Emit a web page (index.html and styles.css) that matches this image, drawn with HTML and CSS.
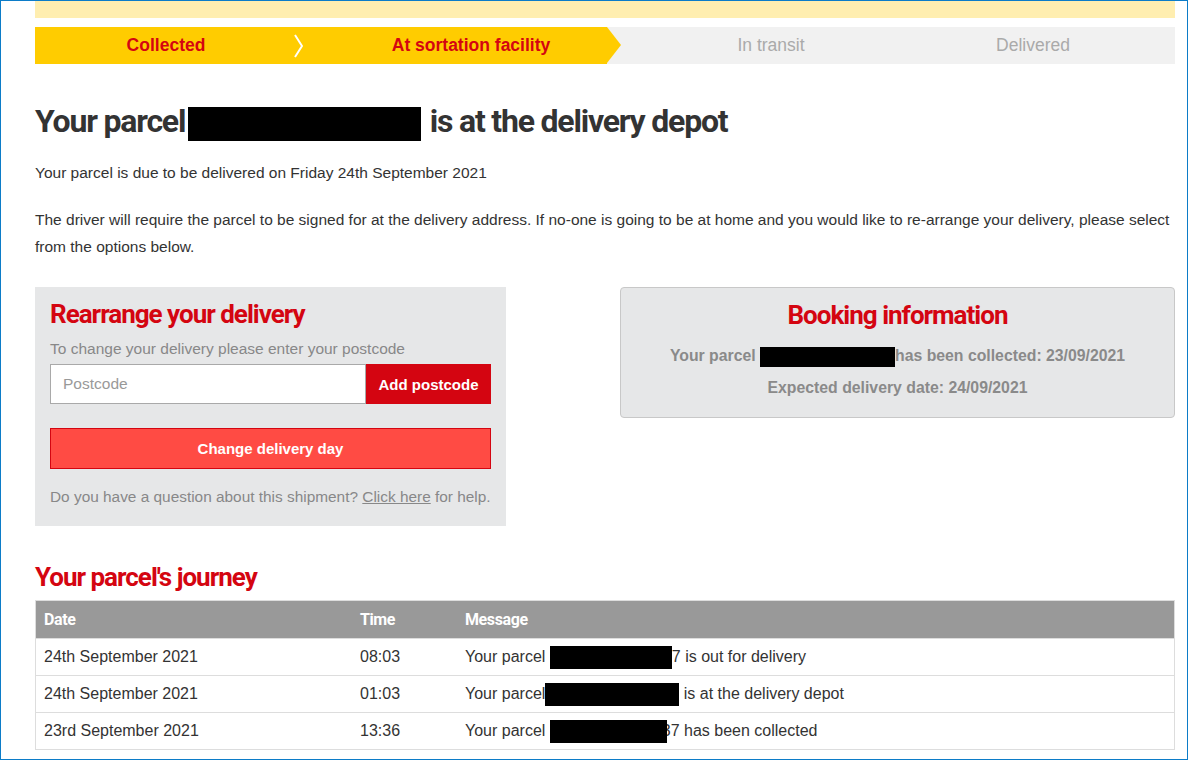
FILE: index.html
```html
<!DOCTYPE html>
<html lang="en">
  <head>
    <meta charset="UTF-8" />
    <meta name="viewport" content="width=device-width, initial-scale=1.0" />
    <title>Track your parcel</title>
    <link rel="stylesheet" href="styles.css">
  </head>
  <body>
    <div class="window">
      <div class="page">
        <div class="notice"></div>

        <div class="progress">
          <div class="step step-first done">Collected</div>
          <div class="chevron">
            <svg width="9" height="24" viewBox="0 0 9 24">
              <polyline points="1,1 8,12 1,23" fill="none" stroke="#fff" stroke-width="2" />
            </svg>
          </div>
          <div class="step step-current done">At sortation facility</div>
          <div class="step step-third">In transit</div>
          <div class="step step-last">Delivered</div>
        </div>

        <h1 class="title">
          Your parcel <span class="redact redact-title"></span> is at the delivery depot
        </h1>

        <p class="lead">Your parcel is due to be delivered on Friday 24th September 2021</p>
        <p class="lead">
          The driver will require the parcel to be signed for at the delivery address. If no-one is going to be at home and you would like to re-arrange your delivery, please select from the options below.
        </p>

        <div class="panels">
          <div class="rearrange">
            <h2 class="red-heading">Rearrange your delivery</h2>
            <p class="hint">To change your delivery please enter your postcode</p>
            <div class="postcode">
              <input type="text" class="postcode-input" placeholder="Postcode" />
              <button class="postcode-button">Add postcode</button>
            </div>
            <button class="change-day">Change delivery day</button>
            <p class="help">Do you have a question about this shipment? <a href="#">Click here</a> for help.</p>
          </div>

          <div class="booking">
            <h2 class="red-heading">Booking information</h2>
            <p class="booking-line">Your parcel <span class="redact redact-booking"></span>has been collected: 23/09/2021</p>
            <p class="booking-line">Expected delivery date: 24/09/2021</p>
          </div>
        </div>

        <h2 class="red-heading journey-title">Your parcel's journey</h2>

        <table class="journey">
          <thead>
            <tr>
              <th class="col-date">Date</th>
              <th class="col-time">Time</th>
              <th>Message</th>
            </tr>
          </thead>
          <tbody>
            <tr>
              <td>24th September 2021</td>
              <td>08:03</td>
              <td>Your parcel <span class="redact redact-row1"></span>7 is out for delivery</td>
            </tr>
            <tr>
              <td>24th September 2021</td>
              <td>01:03</td>
              <td>Your parcel<span class="redact redact-row2"></span> is at the delivery depot</td>
            </tr>
            <tr>
              <td>23rd September 2021</td>
              <td>13:36</td>
              <td>Your parcel <span class="redact redact-row3"></span>37 has been collected</td>
            </tr>
          </tbody>
        </table>
      </div>
    </div>
  </body>
</html>
```

FILE: styles.css
```css
body {
  margin: 0;
  font-family: "Liberation Sans", Arial, sans-serif;
  color: #333;
  background-color: #fff;
}
.window {
  width: 1186px;
  height: 758px;
  border: 1px solid #0c7cc8;
  overflow: hidden;
}
.page {
  width: 1140px;
  margin-left: 34px;
}
.notice {
  height: 17px;
  background-color: #ffeeb0;
}

/* progress bar */
.progress {
  display: flex;
  height: 37px;
  margin-top: 9px;
  background-color: #f1f1f1;
  font-size: 17.5px;
}
.step {
  display: flex;
  align-items: center;
  justify-content: center;
  color: #aaa;
}
.step.done {
  background-color: #fc0;
  color: #d40511;
  font-weight: bold;
}
.step-first {
  width: 259px;
  padding-left: 3px;
  box-sizing: border-box;
}
.chevron {
  display: flex;
  align-items: center;
  width: 9px;
  background-color: #fc0;
}
.step-current {
  position: relative;
  width: 304px;
  padding-left: 32px;
  box-sizing: border-box;
}
.step-current::after {
  content: "";
  position: absolute;
  top: 0;
  right: -14px;
  border-top: 18.5px solid transparent;
  border-bottom: 18.5px solid transparent;
  border-left: 14px solid #fc0;
}
.step-third {
  width: 328px;
}
.step-last {
  flex: 1;
  padding-right: 44px;
}

/* heading and intro */
.title {
  margin: 37px 0 0;
  font-family: Roboto, sans-serif;
  font-size: 32px;
  font-weight: bold;
  letter-spacing: -1.2px;
  line-height: 40px;
  color: #333;
}
.redact {
  display: inline-block;
  background-color: #000;
  vertical-align: middle;
}
.redact-title {
  width: 233px;
  height: 34px;
  margin-left: -4px;
  margin-right: 2px;
}
.lead {
  margin: 18px 0 0;
  font-size: 15.5px;
  line-height: 27px;
}
.lead + .lead {
  margin-top: 20px;
}

/* panels */
.panels {
  display: flex;
  justify-content: space-between;
  align-items: flex-start;
  margin-top: 27px;
}
.red-heading {
  margin: 0;
  font-family: Roboto, sans-serif;
  font-size: 26px;
  font-weight: bold;
  letter-spacing: -1px;
  line-height: 32px;
  color: #d40511;
}
.rearrange {
  width: 471px;
  padding: 11px 15px 18px;
  box-sizing: border-box;
  background-color: #e6e7e8;
}
.hint {
  margin: 8px 0 0;
  font-size: 15.5px;
  line-height: 22px;
  color: #888;
}
.postcode {
  display: flex;
  margin-top: 4px;
}
.postcode-input {
  width: 316px;
  height: 40px;
  box-sizing: border-box;
  border: 1px solid #a9a9a9;
  padding: 0 12px;
  font-family: "Liberation Sans", Arial, sans-serif;
  font-size: 15.5px;
  color: #333;
}
.postcode-input::placeholder {
  color: #999;
}
.postcode-button {
  flex: 1;
  height: 40px;
  border: none;
  background-color: #d40511;
  color: #fff;
  font-family: "Liberation Sans", Arial, sans-serif;
  font-size: 15px;
  font-weight: bold;
}
.change-day {
  display: block;
  width: 100%;
  height: 41px;
  margin-top: 24px;
  border: 1px solid #d40511;
  background-color: #ff4b44;
  color: #fff;
  font-family: "Liberation Sans", Arial, sans-serif;
  font-size: 15px;
  font-weight: bold;
}
.help {
  margin: 17px 0 0;
  font-size: 15.4px;
  line-height: 22px;
  white-space: nowrap;
  color: #888;
}
.help a {
  color: #888;
}
.booking {
  width: 555px;
  padding: 11px 0 13px;
  box-sizing: border-box;
  border: 1px solid #c8c8c8;
  border-radius: 4px;
  background-color: #e6e7e8;
  text-align: center;
}
.booking-line {
  margin: 0;
  font-size: 15.8px;
  font-weight: bold;
  line-height: 32px;
  color: #8a8a8a;
}
.booking-line:first-of-type {
  margin-top: 9px;
}
.redact-booking {
  width: 135px;
  height: 20px;
}

/* journey table */
.journey-title {
  margin-top: 35px;
}
.journey {
  width: 100%;
  margin-top: 7px;
  border-collapse: collapse;
  border: 1px solid #ddd;
  font-size: 16px;
}
.journey th {
  height: 37px;
  padding: 0 0 0 8px;
  background-color: #999;
  color: #fff;
  text-align: left;
  font-family: Roboto, sans-serif;
  font-size: 16px;
  font-weight: bold;
  letter-spacing: -0.4px;
}
.journey td {
  height: 36px;
  padding: 0 0 0 8px;
  border-top: 1px solid #ddd;
  color: #333;
}
.col-date {
  width: 308px;
}
.col-time {
  width: 97px;
}
.redact-row1 {
  width: 122px;
  height: 23px;
}
.redact-row2 {
  width: 134px;
  height: 23px;
}
.redact-row3 {
  position: relative;
  z-index: 1;
  width: 117px;
  height: 23px;
  margin-right: -5px;
}
```
